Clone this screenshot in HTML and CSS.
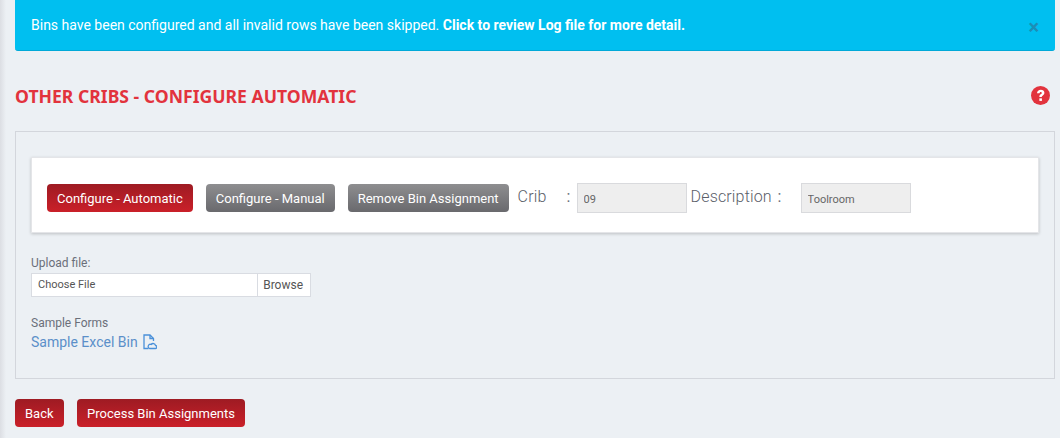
FILE: index.html
```html
<!DOCTYPE html>
<html>
<head>
    <title>Other Cribs - Configure Automatic</title>
    <link rel="stylesheet" href="styles.css">
</head>
<body>
    <div class="page">
        <!-- Status message -->
        <div class="alert">
            <span>Bins have been configured and all invalid rows have been skipped. <b>Click to review Log file for more detail.</b></span>
            <span class="alert-close">×</span>
        </div>

        <div class="title-row">
            <h1>OTHER CRIBS - CONFIGURE AUTOMATIC</h1>
            <svg class="help-icon" viewBox="0 0 20 20">
                <circle cx="10" cy="10" r="10" fill="#e2333d"/>
                <path d="M6.300 7.600C6.500 5.300 8.100 4 10.300 4c2.200 0 3.800 1.300 3.800 3.200 0 1.500-.9 2.300-1.900 3-.7.5-.9.8-.9 1.500H8.800c0-1.500.4-2.200 1.400-2.900.8-.6 1.200-.9 1.200-1.500 0-.6-.4-1-1.100-1-.7 0-1.200.4-1.300 1.300z" fill="#fff"/>
                <rect x="8.800" y="13" width="2.700" height="2.700" fill="#fff"/>
            </svg>
        </div>

        <div class="panel">
            <div class="toolbar">
                <button class="btn btn-red">Configure - Automatic</button>
                <button class="btn btn-grey">Configure - Manual</button>
                <button class="btn btn-grey btn-last">Remove Bin Assignment</button>
                <label class="field-label crib-label">Crib</label>
                <span class="colon">:</span>
                <input class="field" type="text" value="09" disabled>
                <label class="field-label desc-label">Description</label>
                <span class="colon desc-colon">:</span>
                <input class="field" type="text" value="Toolroom" disabled>
            </div>

            <div class="upload">
                <div class="upload-label">Upload file:</div>
                <div class="file-box">
                    <span class="file-name">Choose File</span>
                    <span class="file-browse">Browse</span>
                </div>
            </div>

            <div class="samples">
                <div class="samples-label">Sample Forms</div>
                <a class="sample-link" href="#">Sample Excel Bin
                    <svg class="file-icon" viewBox="0 0 14 16" fill="none" stroke="#4a90d9" stroke-width="1.300">
                        <path d="M5.500 14.500H1V1h6l3.500 3.500V7"/>
                        <path d="M7 1v3.500h3.500"/>
                        <path d="M6.500 14.500h5.700a1.500 1.500 0 0 0 .3-3 2.400 2.400 0 0 0-4.300-1 2 2 0 0 0-1.700 4z"/>
                    </svg>
                </a>
            </div>
        </div>

        <div class="actions">
            <button class="btn btn-red">Back</button>
            <button class="btn btn-red btn-wide">Process Bin Assignments</button>
        </div>
    </div>
</body>
</html>
```

FILE: styles.css
```css
html, body {
    height: 100%;
}
body {
    margin: 0;
    background: linear-gradient(90deg, #dcdee3, #ecf0f4 6px);
    font-family: Roboto, Arial, sans-serif;
    color: #6b6f7a;
    overflow: hidden;
}
.page {
    padding: 0 5px 0 15px;
}
.alert {
    display: flex;
    justify-content: space-between;
    align-items: center;
    height: 51px;
    box-sizing: border-box;
    padding: 0 16px;
    background-color: #00bff0;
    border-bottom: 1px solid #00a9d8;
    border-radius: 0 0 3px 3px;
    color: #fff;
    font-size: 14px;
}
.alert-close {
    color: #1d8db5;
    font-size: 20px;
    font-weight: bold;
    line-height: 1;
    margin: 4px 0 0;
}
.title-row {
    display: flex;
    justify-content: space-between;
    align-items: center;
    height: 70px;
    padding-top: 10px;
}
h1 {
    margin: 0;
    color: #e2333d;
    font-family: "Noto Sans", Arial, sans-serif;
    font-size: 17.6px;
    font-weight: 700;
}
.help-icon {
    width: 19px;
    height: 19px;
    margin: 0 5px 2px 0;
}
.panel {
    height: 248px;
    box-sizing: border-box;
    padding: 25px 15px 0;
    border: 1px solid #d3d6dc;
}
.toolbar {
    display: flex;
    align-items: center;
    height: 76px;
    box-sizing: border-box;
    padding: 6px 15px 0;
    background-color: #fff;
    border: 1px solid #e4e5e8;
    box-shadow: 0 1px 3px rgba(0, 0, 0, 0.2);
}
.btn {
    height: 28px;
    padding: 0 10px;
    border: none;
    border-radius: 4px;
    color: #fff;
    font-family: Roboto, Arial, sans-serif;
    font-size: 13px;
    white-space: nowrap;
}
.btn-wide {
    padding: 0 10.5px;
}
.btn-red {
    background: linear-gradient(#9e1b23, #ca2029);
}
.btn-grey {
    background: linear-gradient(#8e8e90, #69696d);
}
.toolbar .btn {
    margin-right: 13px;
}
.toolbar .btn-last {
    margin-right: 9px;
}
.field-label {
    font-size: 16px;
    font-weight: 300;
    letter-spacing: 0.15px;
    color: #5a5e69;
    margin-bottom: 3px;
}
.crib-label {
    width: 49px;
}
.desc-label {
    width: 86px;
    margin-left: 4px;
}
.colon {
    width: 10px;
    font-size: 16px;
    margin-bottom: 3px;
}
.desc-colon {
    width: 24px;
    box-sizing: border-box;
    padding-left: 1px;
}
.field {
    width: 110px;
    height: 30px;
    box-sizing: border-box;
    padding: 2px 6px 0;
    background-color: #eeeeee;
    border: 1px solid #d9dadd;
    color: #666;
    font-family: Roboto, Arial, sans-serif;
    font-size: 11px;
}
.upload {
    margin-top: 22px;
}
.upload-label, .samples-label {
    font-size: 12px;
    line-height: 16px;
}
.file-box {
    display: flex;
    width: 280px;
    height: 24px;
    box-sizing: border-box;
    background-color: #fff;
    border: 1px solid #d9dce2;
    font-size: 12px;
    line-height: 22px;
    color: #555;
    margin-top: 2px;
}
.file-name {
    flex: 1;
    padding-left: 6px;
    font-size: 11px;
}
.file-browse {
    padding: 0 7px 0 5px;
    border-left: 1px solid #d9dce2;
}
.samples {
    margin-top: 18px;
}
.sample-link {
    display: flex;
    align-items: center;
    gap: 5px;
    margin-top: 1px;
    color: #5b8fc9;
    font-size: 14px;
    line-height: 20px;
    text-decoration: none;
}
.file-icon {
    width: 14px;
    height: 16px;
}
.actions {
    display: flex;
    gap: 13px;
    margin-top: 20px;
}
```
